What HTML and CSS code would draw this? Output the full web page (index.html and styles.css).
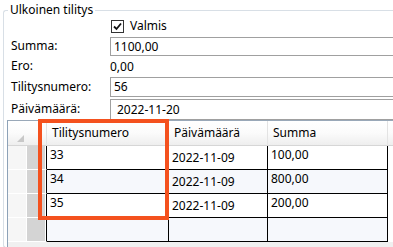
FILE: index.html
```html
<!DOCTYPE html>
<html lang="fi">
<head>
<meta charset="UTF-8">
<title>Ulkoinen tilitys</title>
<link rel="stylesheet" href="styles.css">
</head>
<body>

<!-- ====== Ryhmä ====== -->
<fieldset class="group">
  <legend>Ulkoinen tilitys</legend>

  <div class="form">
    <span></span>
    <label class="check">
      <span class="box"><svg viewBox="0 0 11 11"><path d="M2 5.5 L4.5 8 L9 2.5" fill="none" stroke="#111" stroke-width="1.8"/></svg></span>
      Valmis
    </label>

    <span class="lbl">Summa:</span>
    <div class="field">1100,00</div>

    <span class="lbl">Ero:</span>
    <span class="value">0,00</span>

    <span class="lbl">Tilitysnumero:</span>
    <div class="field short">56</div>

    <span class="lbl">Päivämäärä:</span>
    <div class="field date">2022-11-20</div>
  </div>

  <!-- taulukko -->
  <div class="grid-wrap">
    <div class="dgv">
      <div class="hd corner"><svg viewBox="0 0 7 7"><polygon points="7,0 7,7 0,7" fill="#c8c8c8"/></svg></div>
      <div class="hd">Tilitysnumero</div>
      <div class="hd">Päivämäärä</div>
      <div class="hd">Summa</div>
      <div class="hd fill"></div>

      <div class="rh"></div><div class="c">33</div><div class="c d">2022-11-09</div><div class="c">100,00</div><div class="f"></div>
      <div class="rh"></div><div class="c alt">34</div><div class="c d alt">2022-11-09</div><div class="c alt">800,00</div><div class="f"></div>
      <div class="rh"></div><div class="c">35</div><div class="c d">2022-11-09</div><div class="c">200,00</div><div class="f"></div>
      <div class="rh"></div><div class="c alt"></div><div class="c d alt"></div><div class="c alt"></div><div class="f"></div>
    </div>
    <div class="highlight"></div>
  </div>
</fieldset>

</body>
</html>
```

FILE: styles.css
```css
:root{
  --line   : #000;
  --field  : #a0a0a0;
  --frame  : #d8dfe6;
  --mark   : #f4511e;
  --alt    : #f6f8fc;
}
*{box-sizing:border-box;}
html,body{margin:0;height:100%;overflow:hidden;background:#fff;color:#000;
  font-family:"Noto Sans","Open Sans",sans-serif;font-size:12px;line-height:16px;}

.group{
  margin:2px 0 0 3px;padding:0 0 0 3px;min-width:0;
  border:1px solid var(--frame);border-right:none;border-radius:3px 0 0 3px;
}
.group legend{margin-left:1px;padding:0 2px;line-height:16px;}

/* lomake */
.form{
  display:grid;grid-template-columns:103px 1fr;
  grid-template-rows:19px 19px 21px 22px 21px;
}
.lbl{padding-left:4px;align-self:center;padding-bottom:2px;}
.value{align-self:center;}
.check{display:flex;align-items:center;gap:6px;align-self:start;margin-top:1px;height:14px;margin-left:1px;}
.box{width:13px;height:13px;border:1px solid #333;display:flex;align-items:center;justify-content:center;background:#fff;}
.box svg{width:11px;height:11px;}
.field{
  height:19px;border:1px solid var(--field);border-right:none;padding:0 0 0 3px;
  display:flex;align-items:center;
}
.field.short{height:20px;align-self:start;}
.field.date{height:21px;padding-left:6px;}

/* taulukko */
.grid-wrap{position:relative;}
.dgv{
  display:grid;grid-template-columns:39px 122px 99px 120px 1fr;
  grid-auto-rows:24px;grid-template-rows:25px;
  height:127px;background:#f0f0f0;
  border-left:1px solid #8da2b8;border-top:1px solid #99a8b8;
}
.hd{
  background:linear-gradient(#fff,#fbfbfb 50%,#eeeeee);
  border-right:1px solid #e3e3e3;border-bottom:1px solid #d6d6d6;
  padding:0 0 0 5px;display:flex;align-items:center;
}
.hd.corner{padding:0;align-items:flex-start;}
.hd.corner svg{width:7px;height:7px;margin:14px 0 0 9px;}
.hd.fill{border-right:none;}
.rh{
  background:linear-gradient(to right,#f6f6f6 0 18px,#fff 18px 19px,#d4d4d4 19px 37px,#fff 37px);
  border-right:1px solid var(--line);border-bottom:1px solid #fff;
}
.c{
  background:#fff;border-right:1px solid var(--line);border-bottom:1px solid var(--line);
  padding:1px 0 0 3px;
}
.c.d{padding-top:4px;}
.c.alt{background:var(--alt);}
.f{background:#fff;}

.highlight{
  position:absolute;left:31px;top:-1px;width:131px;height:101px;
  border:4px solid var(--mark);pointer-events:none;
}
```
